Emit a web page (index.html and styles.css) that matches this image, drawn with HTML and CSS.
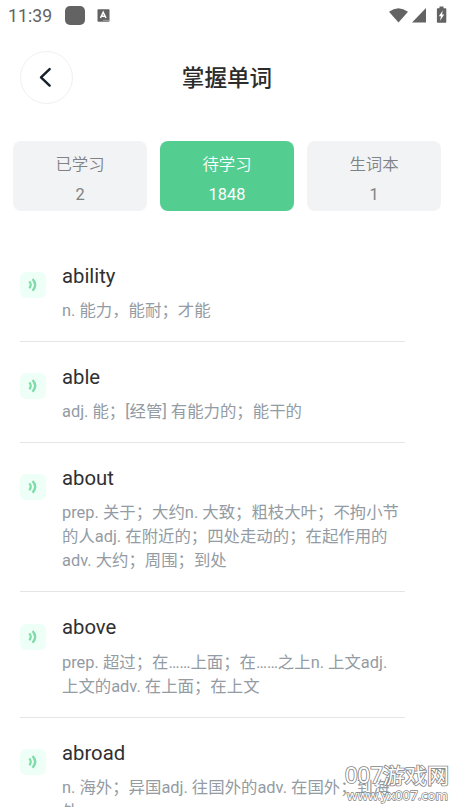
FILE: index.html
```
<!DOCTYPE html>
<html lang="zh-CN">
<head>
<meta charset="utf-8">
<title>掌握单词</title>
<link rel="stylesheet" href="styles.css">
</head>
<body>
<svg class="defs" width="0" height="0" aria-hidden="true">
  <symbol id="sound" viewBox="0 0 26 26">
    <path d="M9.3 9.4Q12.2 12.8 9.3 16.2" stroke-width="2.1"/>
    <path d="M12.6 6.9Q17.8 12.8 12.6 18.7" stroke-width="2.3"/>
  </symbol>
</svg>
<main class="screen">
  <div class="status">
    <span class="time">11:39</span>
    <span class="app-dot"></span>
    <svg class="input-icon" width="13" height="13" viewBox="0 0 13 13"><rect x=".5" y=".3" width="12" height="12.4" rx="1" fill="#636363"/><path d="M3.5 9L6.2 3.2L9 9M4.5 7.3H8" fill="none" stroke="#fff" stroke-width="1.5"/><path d="M6.5 11.4h1m1 0h1m1 0h1" stroke="#ddd"/></svg>
    <svg class="signals" width="60" height="20" viewBox="0 0 60 20"><path d="M1 6.8Q10.3-.2 20 6.8L10.5 17.6Z"/><path d="M24 17.6L38 3.1V17.6Z"/><path d="M51.5 1.5h4v1.8h2.2q.6 0 .6.6v13.2q0 .7-.7.7h-8q-.7 0-.7-.7V3.9q0-.6.6-.6h2Z"/><path d="M54.8 5.5L50.8 11.2h2.1l-.9 4.6 4.2-6.2H54Z" fill="#fff"/></svg>
  </div>
  <header class="header">
    <button class="back" aria-label="返回"><svg width="52" height="52" viewBox="0 0 52 52"><path d="M29.2 17.4L20.4 25.8L29.2 34.2"/></svg></button>
    <h1>掌握单词</h1>
  </header>
  <nav class="tabs">
    <div class="tab"><span>已学习</span><span>2</span></div>
    <div class="tab active"><span>待学习</span><span>1848</span></div>
    <div class="tab"><span>生词本</span><span>1</span></div>
  </nav>
  <section class="words">
    <article class="item"><svg class="sound"><use href="#sound"/></svg><div><h2>ability</h2><p>n. 能力，能耐；才能</p></div></article>
    <article class="item"><svg class="sound"><use href="#sound"/></svg><div><h2>able</h2><p>adj. 能；[经管] 有能力的；能干的</p></div></article>
    <article class="item"><svg class="sound"><use href="#sound"/></svg><div><h2>about</h2><p>prep. 关于；大约n. 大致；粗枝大叶；不拘小节<br>的人adj. 在附近的；四处走动的；在起作用的<br>adv. 大约；周围；到处</p></div></article>
    <article class="item"><svg class="sound"><use href="#sound"/></svg><div><h2>above</h2><p>prep. 超过；在……上面；在……之上n. 上文adj.<br>上文的adv. 在上面；在上文</p></div></article>
    <article class="item"><svg class="sound"><use href="#sound"/></svg><div><h2>abroad</h2><p>n. 海外；异国adj. 往国外的adv. 在国外；到海<br>外</p></div></article>
  </section>
  <div class="watermark">
    <svg width="112" height="46" viewBox="0 0 112 46"><text x="3" y="20.5" textLength="104" lengthAdjust="spacingAndGlyphs" class="brand">007游戏网</text><text x="5" y="38" textLength="101" lengthAdjust="spacingAndGlyphs" class="site">www.yx007.com</text></svg>
  </div>
</main>
</body>
</html>
```

FILE: styles.css
```
* { box-sizing: border-box; }
html, body { margin: 0; }
body { overflow: hidden; background: #fff; font-family: Roboto, "Noto Sans CJK SC", sans-serif; }
h1, h2, p { margin: 0; font-weight: 400; }
.defs { position: absolute; }
.screen { position: relative; width: 454px; height: 807px; overflow: hidden; }
.status { display: flex; align-items: center; height: 31px; padding: 0 6px 0 8px; color: #636363; }
.time { width: 57px; font-size: 17.6px; letter-spacing: .1px; line-height: 31px; padding-top: 1px; }
.app-dot { width: 20px; height: 19px; border-radius: 5px; background: #636363; }
.input-icon { margin-left: 12px; }
.signals { margin-left: auto; fill: #636363; margin-bottom: 2px; }
.header { display: grid; grid-template-columns: 53px 1fr 53px; align-items: center; height: 53px; margin: 20px 20px 0; }
.back { width: 53px; height: 53px; padding: 0; border: 1px solid #f0f0f0; border-radius: 50%; background: #fff; }
.back svg { display: block; width: 51px; height: 51px; fill: none; stroke: #17212b; stroke-width: 2.5; stroke-linecap: round; stroke-linejoin: round; }
.header h1 { padding-top: 2px; text-align: center; font-size: 22.6px; line-height: 34px; font-weight: 500; color: #2c2c2c; }
.tabs { display: grid; grid-template-columns: repeat(3, 134px); gap: 13px; margin: 37px 0 0 13px; }
.tab { display: flex; flex-direction: column; align-items: center; height: 70px; padding-top: 9px; border-radius: 8px; background: #f1f3f5; color: #808284; font-size: 16.4px; line-height: 30px; }
.tab span:first-child { font-weight: 350; }
.tab.active { background: #54cd90; color: #fff; }
.words { margin: 29.5px 50px 0 20px; }
.item { display: grid; grid-template-columns: 26px 1fr; column-gap: 16px; width: 384.5px; padding: 23px 0 18px; border-bottom: 1px solid #e5e5e5; }
.sound { width: 26px; height: 26px; margin-top: 8.2px; border-radius: 6px; background: #edfff6; fill: none; stroke: #7bdca6; stroke-linecap: butt; }
.item h2 { font-size: 20.3px; line-height: 24px; color: #303030; }
.item p { margin-top: 11.3px; font-size: 16.4px; line-height: 24px; color: #939ba3; white-space: nowrap; }
.watermark { position: absolute; left: 342px; top: 762px; }
.watermark text { fill: #fff; stroke: #858585; stroke-width: 1.6px; paint-order: stroke; font-family: "Noto Sans", "Noto Sans CJK SC", sans-serif; }
.brand { font-size: 21px; }
.watermark .site { font-size: 13px; stroke-width: 1.4px; }
```
